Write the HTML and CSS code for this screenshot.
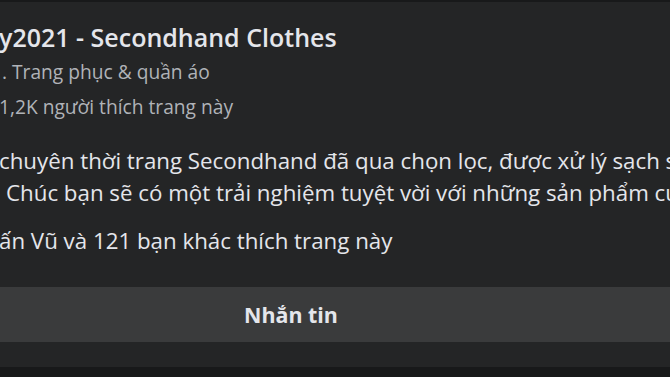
FILE: index.html
```html
<!DOCTYPE html>
<html lang="vi">
<head>
    <meta charset="UTF-8">
    <meta name="viewport" content="width=device-width, initial-scale=1.0">
    <title>Secondhand Clothes</title>
    <link rel="stylesheet" href="styles.css">
</head>
<body>
    <div class="card">
        <div class="info">
            <h1 class="page-name">y2021 - Secondhand Clothes</h1>
            <div class="meta category">. Trang phục &amp; quần áo</div>
            <div class="meta likes">1,2K người thích trang này</div>
            <p class="about">chuyên thời trang Secondhand đã qua chọn lọc, được xử lý sạch s<br>
                <span class="cont">Chúc bạn sẽ có một trải nghiệm tuyệt vời với những sản phẩm cu</span></p>
            <p class="friends">ấn Vũ và 121 bạn khác thích trang này</p>
        </div>
        <button class="message-btn">Nhắn tin</button>
    </div>
</body>
</html>
```

FILE: styles.css
```css
* { margin: 0; padding: 0; box-sizing: border-box; }
html, body { overflow: hidden; }
body { font-family: "Open Sans", "Noto Sans", sans-serif; background-color: #18191a; color: #e4e6eb; padding-top: 2px; height: 377px; }
.card { background: #242526; margin-left: -100px; margin-right: -12px; padding: 0 0 25px 100px; }
.info { white-space: nowrap; padding-top: 19px; margin-left: -1px; overflow: hidden; }
.page-name { font-size: 25px; font-weight: 600; line-height: 32px; }
.meta { font-size: 19.2px; line-height: 24px; color: #b0b3b8; margin-top: 7px; }
.category { padding-left: 3px; }
.likes { margin-top: 11px; }
.about { font-size: 22.3px; line-height: 32px; margin-top: 25.6px; }
.cont { padding-left: 7px; }
.friends { font-size: 22.3px; line-height: 32px; margin-top: 16.7px; }
.message-btn { display: block; margin-top: 30px; margin-left: -100px; width: calc(100% + 100px); height: 55px; border: none; background: #3a3b3c; color: #e4e6eb; font-family: inherit; font-size: 21.4px; font-weight: 700; line-height: 55px; cursor: pointer; }
```
